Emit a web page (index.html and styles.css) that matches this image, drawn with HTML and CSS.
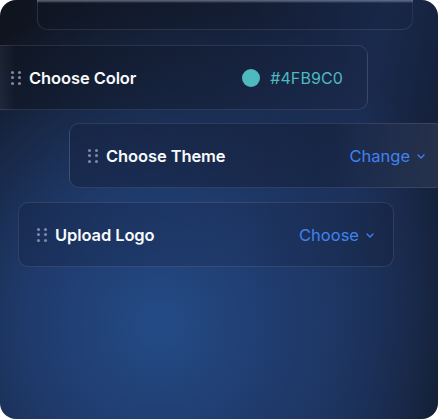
FILE: index.html
```html
<!DOCTYPE html>
<html>
<head>
<meta charset="utf-8">
<link rel="stylesheet" href="styles.css">
</head>
<body>
<div class="panel">
  <div class="card card-top"></div>
  <div class="card card-color">
    <div class="left">
      <span class="grip"><i></i><i></i><i></i><i></i><i></i><i></i></span>
      <span class="label">Choose Color</span>
    </div>
    <div class="right color-value">
      <span class="swatch"></span>
      <span class="hex">#4FB9C0</span>
    </div>
  </div>
  <div class="card card-theme">
    <div class="left">
      <span class="grip"><i></i><i></i><i></i><i></i><i></i><i></i></span>
      <span class="label">Choose Theme</span>
    </div>
    <div class="right action">
      <span>Change</span>
      <svg class="chev" width="8" height="5" viewBox="0 0 8 5"><path d="M1 1l3 3 3-3" fill="none" stroke="currentColor" stroke-width="1.3" stroke-linecap="round" stroke-linejoin="round"/></svg>
    </div>
  </div>
  <div class="card card-logo">
    <div class="left">
      <span class="grip"><i></i><i></i><i></i><i></i><i></i><i></i></span>
      <span class="label">Upload Logo</span>
    </div>
    <div class="right action">
      <span>Choose</span>
      <svg class="chev" width="8" height="5" viewBox="0 0 8 5"><path d="M1 1l3 3 3-3" fill="none" stroke="currentColor" stroke-width="1.3" stroke-linecap="round" stroke-linejoin="round"/></svg>
    </div>
  </div>
</div>
</body>
</html>
```
FILE: styles.css
```css
html, body {
  margin: 0;
  padding: 0;
  background: #ffffff;
}

.panel {
  width: 438px;
  height: 419px;
  border-radius: 16px;
  overflow: hidden;
  display: flex;
  flex-direction: column;
  gap: 13px;
  font-family: "Inter", "Noto Sans", sans-serif;
  background:
    radial-gradient(ellipse 320px 330px at 160px 325px, #244b87 0%, #1f3a6b 42%, rgba(22,34,62,0) 100%),
    linear-gradient(100deg, #0f141e 0%, #141d33 45%, #1a2a4e 75%, #121a2b 100%);
}

.card {
  flex: 0 0 auto;
  box-sizing: border-box;
  width: 376px;
  height: 65px;
  border-radius: 10px;
  border: 1px solid rgba(255, 255, 255, 0.1);
  background: linear-gradient(90deg, rgba(16, 22, 36, 0.55) 0%, rgba(24, 36, 66, 0.35) 100%);
  display: flex;
  align-items: center;
  justify-content: space-between;
  padding: 0 20px 0 18px;
}

.card-top {
  margin-top: -35px;
  margin-left: 37px;
  background:
    linear-gradient(to bottom, transparent 34px, rgba(190, 200, 220, 0.45) 34px, rgba(190, 200, 220, 0.2) 36px, transparent 37px),
    linear-gradient(90deg, rgba(16, 22, 36, 0.55) 0%, rgba(24, 36, 66, 0.35) 100%);
}

.card-color {
  margin-top: 2px;
  margin-left: -8px;
  background: linear-gradient(90deg, rgba(60, 70, 90, 0.4) 0%, rgba(16, 22, 36, 0.6) 6%, rgba(20, 28, 48, 0.45) 60%, rgba(26, 38, 70, 0.35) 100%);
}

.card-theme {
  margin-left: 69px;
  padding-right: 19px;
  background: linear-gradient(90deg, rgba(22, 34, 64, 0.55) 0%, rgba(20, 30, 54, 0.5) 70%, rgba(60, 72, 100, 0.45) 100%);
}

.card-logo {
  margin-left: 18px;
  margin-top: 1px;
  padding-right: 19px;
  background: linear-gradient(90deg, rgba(22, 38, 72, 0.45) 0%, rgba(28, 46, 88, 0.35) 60%, rgba(22, 34, 62, 0.45) 100%);
}

.left {
  display: flex;
  align-items: center;
  gap: 8px;
}

.grip {
  display: grid;
  grid-template-columns: repeat(2, 3px);
  grid-template-rows: repeat(3, 3px);
  column-gap: 4px;
  row-gap: 2.5px;
}

.grip i {
  display: block;
  width: 3px;
  height: 3px;
  border-radius: 50%;
  background: #7c8aa5;
}

.label {
  color: #f8fafc;
  font-size: 16.5px;
  font-weight: 600;
  letter-spacing: -0.1px;
}

.right {
  display: flex;
  align-items: center;
}

.color-value {
  gap: 10px;
  margin-right: 4px;
}

.swatch {
  width: 18px;
  height: 18px;
  border-radius: 50%;
  background: #4fb9c0;
}

.hex {
  color: #4fb9c0;
  font-size: 16px;
  font-weight: 400;
  letter-spacing: 0.1px;
}

.action {
  gap: 7px;
  color: #3f83f0;
  font-size: 16.5px;
  font-weight: 400;
}

.chev {
  display: block;
  margin-top: 1px;
}
```
